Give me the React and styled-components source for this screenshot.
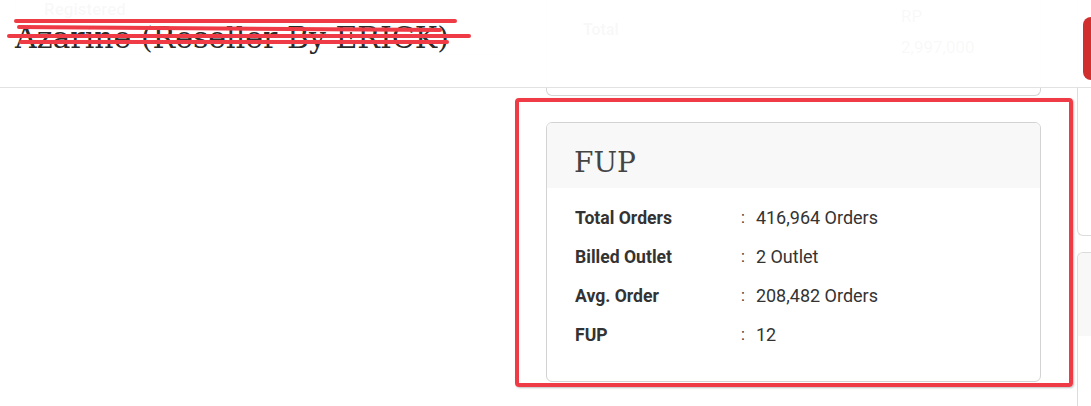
import React from "react";
import styled, { createGlobalStyle } from "styled-components";

const Global = createGlobalStyle`
  html, body { margin: 0; padding: 0; background: #fff; }
  body { font-family: Roboto, "Liberation Sans", sans-serif; color: #333; }
`;

const Page = styled.div`
  position: relative;
  width: 1091px;
  height: 406px;
  overflow: hidden;
  background: #fff;
`;

const Content = styled.div`
  display: grid;
  grid-template-columns: 515px 558px 1fr;
  align-items: start;
`;

/* ---------- left column ---------- */
const LeftCard = styled.div`
  margin-left: 15px;
  width: 494px;
  height: 56px;
  box-sizing: border-box;
  border: 1px solid #ddd;
  border-top: none;
  border-radius: 0 0 6px 6px;
  padding-left: 28px;
`;

const Muted = styled.div`
  font-weight: 500;
  font-size: 17px;
  line-height: 20px;
  margin-top: -1px;
  color: #333;
`;

/* ---------- middle column ---------- */
const Middle = styled.div`
  display: flex;
  flex-direction: column;
`;

const SummaryCard = styled.div`
  margin-left: 31px;
  width: 495px;
  height: 96px;
  box-sizing: border-box;
  border: 1px solid #d5d5d5;
  border-top: none;
  border-radius: 0 0 6px 6px;
  display: grid;
  grid-template-columns: 318px 1fr;
  padding-left: 36px;
`;

const SummaryLabel = styled.div`
  font-weight: 700;
  font-size: 16px;
  line-height: 20px;
  padding-top: 20px;
`;

const SummaryValue = styled.div`
  font-size: 17px;
  line-height: 31px;
  padding-top: 1px;
`;

const Annotation = styled.div`
  margin-top: 2px;
  border: 4px solid #ee3b45;
  border-radius: 4px;
  padding: 20px 28px 1px 27px;
  box-shadow: 1px 1px 2px rgba(0, 0, 0, 0.25);
`;

const InfoCard = styled.div`
  width: 495px;
  box-sizing: border-box;
  border: 1px solid #d3d3d3;
  border-radius: 6px;
  overflow: hidden;
  background: #fff;
`;

const CardHeader = styled.div`
  height: 65px;
  box-sizing: border-box;
  background: #f8f8f8;
  padding: 22px 27px 0;
`;

const CardTitle = styled.h3`
  margin: 0;
  font-family: "DejaVu Serif", "Liberation Serif", serif;
  font-weight: 400;
  font-size: 28px;
  line-height: 36px;
  color: #444;
`;

const CardBody = styled.div`
  padding: 10px 28px 27px;
  display: grid;
  grid-template-columns: 166px auto 1fr;
  grid-auto-rows: 39px;
  align-items: center;
  line-height: 22px;
  font-size: 18px;
  color: #333;
`;

const Label = styled.div`
  font-weight: 700;
  font-size: 17.6px;
`;

const Colon = styled.div`
  font-size: 16px;
`;

const Value = styled.div`
  padding-left: 11px;
`;

/* ---------- right column ---------- */
const Right = styled.div`
  margin-left: 4px;
  display: flex;
  flex-direction: column;
  gap: 16px;
`;

const SideCardTop = styled.div`
  height: 236px;
  box-sizing: border-box;
  border-left: 1px solid #dcdcdc;
  border-bottom: 1px solid #dcdcdc;
  border-radius: 0 0 0 6px;
`;

const SideCard = styled.div`
  height: 220px;
  box-sizing: border-box;
  border: 1px solid #dcdcdc;
  border-right: none;
  border-radius: 6px 0 0 0;
  overflow: hidden;
`;

const SideCardHeader = styled.div`
  height: 83px;
  background: #f8f8f8;
`;

/* ---------- sticky header overlay ---------- */
const Header = styled.header`
  position: absolute;
  top: 0;
  left: 0;
  right: 0;
  height: 88px;
  box-sizing: border-box;
  background: rgba(255, 255, 255, 0.97);
  border-bottom: 1px solid #e2e2e2;
  display: flex;
  justify-content: space-between;
  align-items: flex-start;
  padding-left: 15px;
`;

const Title = styled.h1`
  margin: 20px 0 0;
  font-family: "DejaVu Serif", "Liberation Serif", serif;
  font-weight: 400;
  font-size: 30px;
  line-height: 36px;
  color: #2a2a2a;
  white-space: nowrap;
`;

const Scribble = styled.svg`
  position: absolute;
  left: 0;
  top: 0;
  pointer-events: none;
`;

const ActionButton = styled.button`
  margin-top: 17px;
  margin-right: -52px;
  width: 60px;
  height: 63px;
  border: none;
  border-radius: 8px;
  background: #d12e2e;
`;

const rows = [
  ["Total Orders", "416,964 Orders"],
  ["Billed Outlet", "2 Outlet"],
  ["Avg. Order", "208,482 Orders"],
  ["FUP", "12"],
];

export default function App() {
  return (
    <>
      <Global />
      <Page>
        <Content>
          <div>
            <LeftCard>
              <Muted>Registered</Muted>
            </LeftCard>
          </div>
          <Middle>
            <SummaryCard>
              <SummaryLabel>Total</SummaryLabel>
              <SummaryValue>
                RP
                <br />
                2,997,000
              </SummaryValue>
            </SummaryCard>
            <Annotation>
              <InfoCard>
                <CardHeader>
                  <CardTitle>FUP</CardTitle>
                </CardHeader>
                <CardBody>
                  {rows.map(([l, v]) => (
                    <React.Fragment key={l}>
                      <Label>{l}</Label>
                      <Colon>:</Colon>
                      <Value>{v}</Value>
                    </React.Fragment>
                  ))}
                </CardBody>
              </InfoCard>
            </Annotation>
          </Middle>
          <Right>
            <SideCardTop />
            <SideCard>
              <SideCardHeader />
            </SideCard>
          </Right>
        </Content>
        <Header>
          <Title>Azarine (Reseller By ERICK)</Title>
          <ActionButton aria-label="action" />
          <Scribble width="480" height="60" viewBox="0 0 480 60">
            <g stroke="#ee3b45" strokeWidth="4" strokeLinecap="round" fill="none">
              <line x1="16" y1="21" x2="455" y2="21" />
              <line x1="19" y1="27" x2="440" y2="30" />
              <line x1="9" y1="36" x2="469" y2="36" />
              <line x1="21" y1="42" x2="447" y2="42" />
            </g>
          </Scribble>
        </Header>
      </Page>
    </>
  );
}
